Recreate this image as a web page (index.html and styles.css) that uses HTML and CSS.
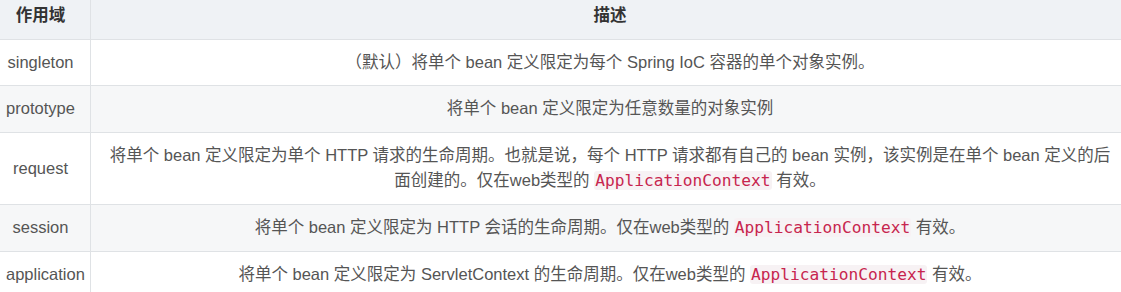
FILE: index.html
```html
<!DOCTYPE html>
<html lang="zh-CN">
<head>
<meta charset="utf-8">
<title>Bean 作用域</title>
<link rel="stylesheet" href="styles.css">
</head>
<body>
<table class="scopes">
  <thead>
    <tr><th class="c-scope">作用域</th><th class="c-desc">描述</th></tr>
  </thead>
  <tbody>
    <tr><td>singleton</td><td>（默认）将单个 bean 定义限定为每个 Spring IoC 容器的单个对象实例。</td></tr>
    <tr><td>prototype</td><td>将单个 bean 定义限定为任意数量的对象实例</td></tr>
    <tr><td>request</td><td>将单个 bean 定义限定为单个 HTTP 请求的生命周期。也就是说，每个 HTTP 请求都有自己的 bean 实例，该实例是在单个 bean 定义的后面创建的。仅在web类型的 <code>ApplicationContext</code> 有效。</td></tr>
    <tr><td>session</td><td>将单个 bean 定义限定为 HTTP 会话的生命周期。仅在web类型的 <code>ApplicationContext</code> 有效。</td></tr>
    <tr><td>application</td><td>将单个 bean 定义限定为 ServletContext 的生命周期。仅在web类型的 <code>ApplicationContext</code> 有效。</td></tr>
  </tbody>
</table>
</body>
</html>
```

FILE: styles.css
```css
html, body {
  margin: 0;
  padding: 0;
  background: #ffffff;
  overflow: hidden;
}

.scopes {
  margin: -8px 0 0 -10px;
  width: 1140px;
  border-collapse: collapse;
  table-layout: fixed;
  font-family: "Liberation Sans", "Noto Sans CJK SC", sans-serif;
  font-size: 16.5px;
  line-height: 25.6px;
  color: #555555;
}

.scopes th,
.scopes td {
  border: 1px solid #dfe2e5;
  padding: 10px 15px;
  text-align: center;
  vertical-align: middle;
}

.scopes th {
  background: #eff2f5;
  color: #333333;
  font-weight: bold;
}

.c-scope {
  width: 69px;
}

.scopes tbody tr:nth-child(even) td {
  background: #f6f7f8;
}

.scopes code {
  font-family: "DejaVu Sans Mono", "Liberation Mono", monospace;
  font-size: 16.2px;
  color: #c7254e;
  background: #f7f2f4;
  padding: 0 1px;
  border-radius: 3px;
}
```
